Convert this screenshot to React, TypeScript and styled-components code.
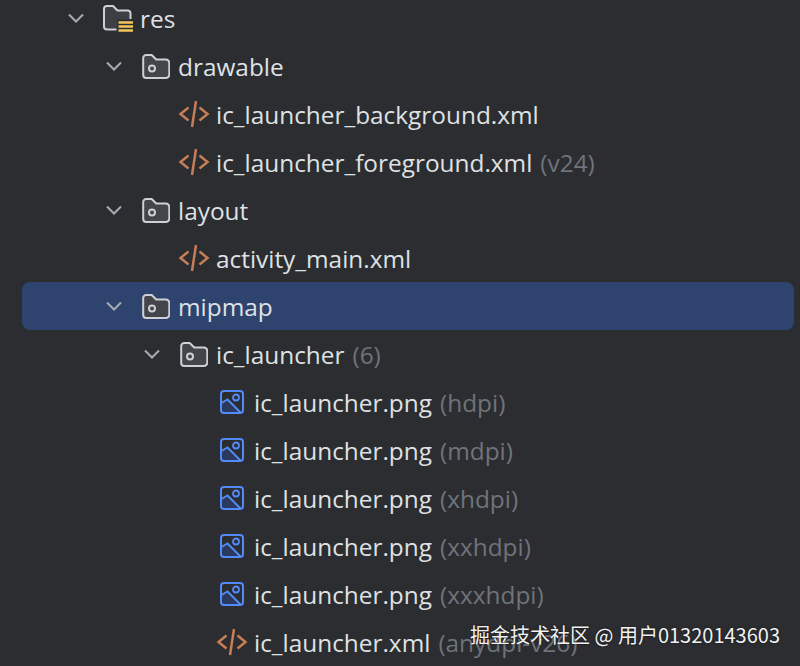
import React from "react";
import styled, { createGlobalStyle } from "styled-components";

const GlobalStyle = createGlobalStyle`
  html, body {
    margin: 0;
    height: 100%;
    background: #2b2d30;
    overflow: hidden;
  }
`;

const Page = styled.div`
  position: relative;
  width: 800px;
  height: 666px;
  overflow: hidden;
  background: #2b2d30;
  font-family: "Open Sans", "Noto Sans", sans-serif;
`;

const Tree = styled.div`
  display: flex;
  flex-direction: column;
  margin: -6px 6px 0 22px;
`;

const Row = styled.div<{ $depth: number; $selected?: boolean }>`
  display: flex;
  align-items: center;
  flex: none;
  height: 48px;
  padding-left: ${(p) => 38 + p.$depth * 38}px;
  border-radius: 8px;
  background: ${(p) => (p.$selected ? "#2e436e" : "transparent")};
`;

const ChevronSlot = styled.span`
  display: flex;
  align-items: center;
  justify-content: center;
  width: 32px;
  height: 48px;
  flex: none;
`;

const IconSlot = styled.span`
  display: flex;
  align-items: center;
  justify-content: center;
  box-sizing: border-box;
  width: 48px;
  height: 48px;
  padding-left: 4px;
  flex: none;
`;

const Name = styled.span`
  color: #dfe1e5;
  font-size: 24.4px;
  white-space: nowrap;
`;

const Hint = styled.span`
  margin-left: 8px;
  color: #6f737a;
  font-size: 24.4px;
  white-space: nowrap;
`;

const Watermark = styled.div`
  position: absolute;
  left: 470px;
  top: 621px;
  color: #f2f2f2;
  font-family: "Noto Sans CJK SC", "Noto Sans", sans-serif;
  font-size: 20px;
  line-height: 28px;
  white-space: nowrap;
  text-shadow: 0 0 2px rgba(0, 0, 0, 0.7);
`;

const Chevron = () => (
  <svg width="18" height="12" viewBox="0 0 18 12" fill="none">
    <path d="M2 2.5 L9 9.5 L16 2.5" stroke="#a8adb5" strokeWidth="2" />
  </svg>
);

const ResFolder = () => (
  <svg width="32" height="28" viewBox="0 0 32 28" fill="none">
    <path d="M2 5 a3 3 0 0 1 3-3 h6 l4.5 4.5 h10 a3 3 0 0 1 3 3 v6 h-13 v10 h-10.5 a3 3 0 0 1-3-3 z" fill="#3d3f44" />
    <path
      d="M14.5 25.5 H5 a3 3 0 0 1-3-3 V5 a3 3 0 0 1 3-3 h6 l4.5 4.5 h10 a3 3 0 0 1 3 3 V15"
      stroke="#ced0d6"
      strokeWidth="2"
      strokeLinejoin="round"
    />
    <path d="M16.5 18.5 h14.5 M16.5 22.5 h14.5 M16.5 26.5 h14.5" stroke="#f2c55c" strokeWidth="2.3" />
  </svg>
);

const Folder = () => (
  <svg width="28" height="25" viewBox="0 0 28 25" fill="none">
    <path
      d="M1.2 4 a3 3 0 0 1 3-3 h5.5 l4.5 4.5 h9.6 a3.5 3.5 0 0 1 3.5 3.5 v11.5 a3.5 3.5 0 0 1-3.5 3.5 h-19.6 a3 3 0 0 1-3-3 z"
      fill="#43454a"
      stroke="#ced0d6"
      strokeWidth="2"
      strokeLinejoin="round"
    />
    <circle cx="10" cy="14.5" r="3" stroke="#ced0d6" strokeWidth="2" />
  </svg>
);

const XmlIcon = () => (
  <svg width="32" height="28" viewBox="0 0 32 28" fill="none">
    <path
      d="M10.5 7.5 L2.5 14 L10.5 20.5 M21.5 7.5 L29.5 14 L21.5 20.5 M18 1 L14 27"
      stroke="#c77d55"
      strokeWidth="2.5"
    />
  </svg>
);

const ImageIcon = () => (
  <svg width="24" height="24" viewBox="0 0 24 24" fill="none">
    <path d="M2 13 L7.5 9.5 L20 22 H3 a1 1 0 0 1-1-1 Z" fill="#2b3a5c" />
    <rect x="1" y="1" width="22" height="22" rx="3" stroke="#548af7" strokeWidth="2" />
    <circle cx="16" cy="7.5" r="3" stroke="#548af7" strokeWidth="1.8" />
    <path d="M1.5 13 L7.5 9.5 L20.5 22.5" stroke="#548af7" strokeWidth="2" />
  </svg>
);

type Kind = "res" | "folder" | "xml" | "image";

type Item = {
  depth: number;
  kind: Kind;
  name: string;
  hint?: string;
  selected?: boolean;
};

const items: Item[] = [
  { depth: 0, kind: "res", name: "res" },
  { depth: 1, kind: "folder", name: "drawable" },
  { depth: 2, kind: "xml", name: "ic_launcher_background.xml" },
  { depth: 2, kind: "xml", name: "ic_launcher_foreground.xml", hint: "(v24)" },
  { depth: 1, kind: "folder", name: "layout" },
  { depth: 2, kind: "xml", name: "activity_main.xml" },
  { depth: 1, kind: "folder", name: "mipmap", selected: true },
  { depth: 2, kind: "folder", name: "ic_launcher", hint: "(6)" },
  { depth: 3, kind: "image", name: "ic_launcher.png", hint: "(hdpi)" },
  { depth: 3, kind: "image", name: "ic_launcher.png", hint: "(mdpi)" },
  { depth: 3, kind: "image", name: "ic_launcher.png", hint: "(xhdpi)" },
  { depth: 3, kind: "image", name: "ic_launcher.png", hint: "(xxhdpi)" },
  { depth: 3, kind: "image", name: "ic_launcher.png", hint: "(xxxhdpi)" },
  { depth: 3, kind: "xml", name: "ic_launcher.xml", hint: "(anydpi-v26)" },
];

const icons: Record<Kind, React.ReactNode> = {
  res: <ResFolder />,
  folder: <Folder />,
  xml: <XmlIcon />,
  image: <ImageIcon />,
};

const App = () => {
  return (
    <Page>
      <GlobalStyle />
      <Tree>
        {items.map((item, i) => (
          <Row key={i} $depth={item.depth} $selected={item.selected}>
            <ChevronSlot>{item.kind === "res" || item.kind === "folder" ? <Chevron /> : null}</ChevronSlot>
            <IconSlot>{icons[item.kind]}</IconSlot>
            <Name>{item.name}</Name>
            {item.hint && <Hint>{item.hint}</Hint>}
          </Row>
        ))}
      </Tree>
      <Watermark>掘金技术社区 @ 用户01320143603</Watermark>
    </Page>
  );
};

export default App;
